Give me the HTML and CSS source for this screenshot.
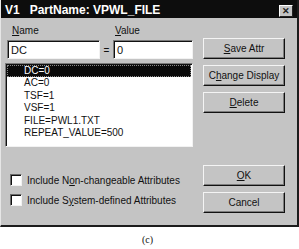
FILE: index.html
```html
<!DOCTYPE html>
<html>
<head>
    <title>VPWL_FILE Attributes</title>
    <link rel="stylesheet" href="styles.css">
</head>
<body>
    <div class="dialog">
        <div class="titlebar">
            <span class="title-text">V1   PartName: VPWL_FILE</span>
            <span class="close-btn">&#x2715;</span>
        </div>
        <div class="dialog-body">
            <div class="left-col">
                <div class="field-grid labels">
                    <span class="label-name"><u>N</u>ame</span>
                    <span></span>
                    <span class="label-value"><u>V</u>alue</span>
                </div>
                <div class="field-grid fields">
                    <div class="text-input name-input">DC</div>
                    <span class="equals">=</span>
                    <div class="text-input">0</div>
                </div>
                <ul class="attr-list">
                    <li class="selected"><span>DC=0</span></li>
                    <li><span>AC=0</span></li>
                    <li><span>TSF=1</span></li>
                    <li><span>VSF=1</span></li>
                    <li><span>FILE=PWL1.TXT</span></li>
                    <li><span>REPEAT_VALUE=500</span></li>
                </ul>
                <div class="checks">
                    <label class="check-row"><span class="check-box"></span>Include N<u>o</u>n-changeable Attributes</label>
                    <label class="check-row"><span class="check-box"></span>Include S<u>y</u>stem-defined Attributes</label>
                </div>
            </div>
            <div class="right-col">
                <div class="btn"><u>S</u>ave Attr</div>
                <div class="btn">C<u>h</u>ange Display</div>
                <div class="btn"><u>D</u>elete</div>
                <div class="btn btn-ok"><u>O</u>K</div>
                <div class="btn">Cancel</div>
            </div>
        </div>
    </div>
    <div class="caption">(c)</div>
</body>
</html>
```

FILE: styles.css
```css
body {
    margin: 0;
    background: #fff;
    font-family: "Liberation Sans", Arial, sans-serif;
    font-size: 10px;
    color: #111;
}

.dialog {
    width: 299px;
    height: 227px;
    box-sizing: border-box;
    background: #c4c4c4;
    border-left: 1px solid #e6e6e6;
    border-right: 2px solid #1c1c1c;
    border-bottom: 2px solid #1c1c1c;
    display: flex;
    flex-direction: column;
}

.titlebar {
    height: 18px;
    flex: 0 0 18px;
    background: #0d0d0d;
    color: #fff;
    font-weight: bold;
    font-size: 12px;
    display: flex;
    align-items: center;
    padding: 0 4px 0 4px;
}

.title-text {
    white-space: pre;
    padding-top: 2px;
}

.close-btn {
    margin-left: auto;
    align-self: flex-end;
    margin-bottom: 1px;
    width: 14px;
    height: 12px;
    box-sizing: border-box;
    background: #c4c4c4;
    color: #222;
    font-size: 9px;
    line-height: 10px;
    text-align: center;
    border: 1px solid;
    border-color: #fff #222 #222 #fff;
}

.dialog-body {
    flex: 1;
    display: flex;
    padding-left: 4px;
}

.left-col {
    width: 188px;
    display: flex;
    flex-direction: column;
}

.field-grid {
    display: grid;
    grid-template-columns: 95px 13px 80px;
}

.labels {
    margin-top: 7px;
    line-height: 12px;
}

.label-name {
    padding-left: 7px;
}

.label-value {
    padding-left: 2px;
}

.fields {
    margin-top: 3px;
    height: 19px;
}

.text-input {
    box-sizing: border-box;
    height: 19px;
    background: #fff;
    border: 1px solid;
    border-color: #7a7a7a #f2f2f2 #f2f2f2 #7a7a7a;
    box-shadow: inset 1px 1px #111;
    padding: 3px 0 0 3px;
    font-size: 11px;
    line-height: 13px;
}

.name-input {
    margin-left: 2px;
}

.equals {
    text-align: center;
    padding-top: 5px;
}

.attr-list {
    list-style: none;
    margin: 4px 0 0;
    padding: 1px 1px 0;
    height: 84px;
    box-sizing: border-box;
    background: #fff;
    border: 1px solid;
    border-color: #7a7a7a #f2f2f2 #f2f2f2 #7a7a7a;
    box-shadow: inset 1px 1px #111;
}

.attr-list li {
    line-height: 12.4px;
    padding-left: 17px;
    font-size: 10px;
}

.attr-list li.selected {
    background: #0a0a0a;
    color: #fff;
    outline: 1px dotted #888;
    outline-offset: -1px;
}

.checks {
    margin-top: 26px;
    display: flex;
    flex-direction: column;
    gap: 6px;
}

.check-row {
    display: flex;
    align-items: center;
    height: 14px;
    padding-left: 5px;
}

.check-box {
    width: 12px;
    height: 12px;
    box-sizing: border-box;
    background: #fff;
    border: 1px solid;
    border-color: #6a6a6a #f2f2f2 #f2f2f2 #6a6a6a;
    box-shadow: inset 1px 1px #111;
    margin-right: 5px;
}

.right-col {
    margin-left: 10px;
    width: 82px;
    padding-top: 20px;
    display: flex;
    flex-direction: column;
    gap: 6px;
}

.btn {
    height: 21px;
    box-sizing: border-box;
    border: 1px solid;
    border-color: #f4f4f4 #111 #111 #f4f4f4;
    box-shadow: inset -1px -1px #7d7d7d;
    display: flex;
    align-items: center;
    justify-content: center;
    font-size: 10px;
}

.btn-ok {
    margin-top: 46px;
}

.caption {
    text-align: center;
    font-family: "Liberation Serif", serif;
    font-size: 10px;
    line-height: 12px;
    margin-top: 7px;
    padding-right: 4px;
}
```
